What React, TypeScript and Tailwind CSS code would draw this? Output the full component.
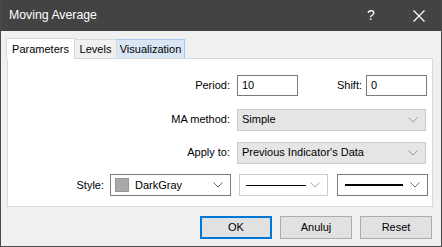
import React from "react";

function Chevron({ color = "#7a7a7a" }: { color?: string }) {
  return (
    <svg width="10" height="6" viewBox="0 0 10 6" className="shrink-0">
      <path d="M0.5 0.5 L5 5 L9.5 0.5" fill="none" stroke={color} strokeWidth="1" />
    </svg>
  );
}

export default function App() {
  const font = { fontFamily: '"Liberation Sans", Arial, sans-serif' };
  return (
    <div
      className="w-[442px] h-[247px] bg-[#f0f0f0] border-x border-b border-[#4a4a4a] flex flex-col text-[11px] text-black overflow-hidden"
      style={font}
    >
      {/* Title bar */}
      <div className="h-[31px] bg-[#434343] flex items-center shrink-0 -mx-px">
        <span className="pl-[9px] text-white text-[12.3px] flex-1">Moving Average</span>
        <span className="text-white text-[14px] w-[46px] text-center mr-[2px]">?</span>
        <div className="w-[46px] flex justify-center">
          <svg width="12" height="12" viewBox="0 0 12 12">
            <path d="M0.5 0.5 L11.5 11.5 M11.5 0.5 L0.5 11.5" stroke="#ffffff" strokeWidth="1.2" />
          </svg>
        </div>
      </div>

      {/* Body */}
      <div className="flex flex-col pl-[5px] pr-[8px] pt-[7px]">
        {/* Tabs */}
        <div className="flex items-end h-[20px] relative z-10">
          <div className="h-[21px] -mb-px w-[69px] justify-center bg-white border border-b-0 border-[#d9d9d9] flex items-center">
            Parameters
          </div>
          <div className="h-[19px] w-[42px] justify-center bg-[#f0f0f0] border-t border-r border-[#d9d9d9] flex items-center">
            Levels
          </div>
          <div className="h-[19px] w-[68px] justify-center bg-[#d9e7f4] border-t border-r border-[#a7c8ea] flex items-center">
            Visualization
          </div>
        </div>

        {/* Panel */}
        <div className="ml-px h-[149px] bg-white border border-[#d9d9d9] flex flex-col pt-[16px]">
          {/* Row 1 */}
          <div className="flex items-center h-[21px]">
            <span className="w-[222px] text-right">Period:</span>
            <div className="ml-[7px] w-[61px] h-[21px] border border-[#7a7a7a] bg-white flex items-center pl-[4px]">10</div>
            <span className="w-[64px] text-right">Shift:</span>
            <div className="ml-[4px] w-[61px] h-[21px] border border-[#7a7a7a] bg-white flex items-center pl-[4px]">0</div>
          </div>
          {/* Row 2 */}
          <div className="flex items-center h-[21px] mt-[13px]">
            <span className="w-[222px] text-right">MA method:</span>
            <div className="ml-[7px] w-[189px] h-[22px] border border-[#cccccc] bg-[#e5e5e5] flex items-center pl-[4px] pr-[7px]">
              <span className="flex-1">Simple</span>
              <Chevron color="#9a9a9a" />
            </div>
          </div>
          {/* Row 3 */}
          <div className="flex items-center h-[21px] mt-[12px]">
            <span className="w-[222px] text-right">Apply to:</span>
            <div className="ml-[7px] w-[189px] h-[22px] border border-[#cccccc] bg-[#e5e5e5] flex items-center pl-[4px] pr-[7px]">
              <span className="flex-1">Previous Indicator's Data</span>
              <Chevron color="#9a9a9a" />
            </div>
          </div>
          {/* Row 4 */}
          <div className="flex items-center h-[22px] mt-[11px]">
            <span className="w-[96px] text-right">Style:</span>
            <div className="ml-[6px] w-[121px] h-[22px] border border-[#7a7a7a] bg-white flex items-center pl-[4px] pr-[7px]">
              <div className="w-[14px] h-[14px] bg-[#a9a9a9] border border-[#969696]" />
              <span className="flex-1 ml-[6px]">DarkGray</span>
              <Chevron color="#6a6a6a" />
            </div>
            <div className="ml-[8px] w-[89px] h-[22px] border border-[#cccccc] bg-white flex items-center pl-[6px] pr-[7px]">
              <div className="w-[60px] h-px bg-black" />
              <span className="flex-1" />
              <Chevron color="#b0b0b0" />
            </div>
            <div className="ml-[9px] w-[91px] h-[22px] border border-[#7a7a7a] bg-white flex items-center pl-[7px] pr-[7px]">
              <div className="w-[58px] h-[2px] bg-black" />
              <span className="flex-1" />
              <Chevron color="#6a6a6a" />
            </div>
          </div>
        </div>

        {/* Buttons */}
        <div className="flex justify-end gap-[8px] mt-[9px] pr-[1px]">
          <div className="w-[72px] h-[23px] bg-[#e1e1e1] border-2 border-[#0078d7] flex items-center justify-center">OK</div>
          <div className="w-[72px] h-[23px] bg-[#e1e1e1] border border-[#adadad] flex items-center justify-center">Anuluj</div>
          <div className="w-[72px] h-[23px] bg-[#e1e1e1] border border-[#adadad] flex items-center justify-center">Reset</div>
        </div>
      </div>
    </div>
  );
}
